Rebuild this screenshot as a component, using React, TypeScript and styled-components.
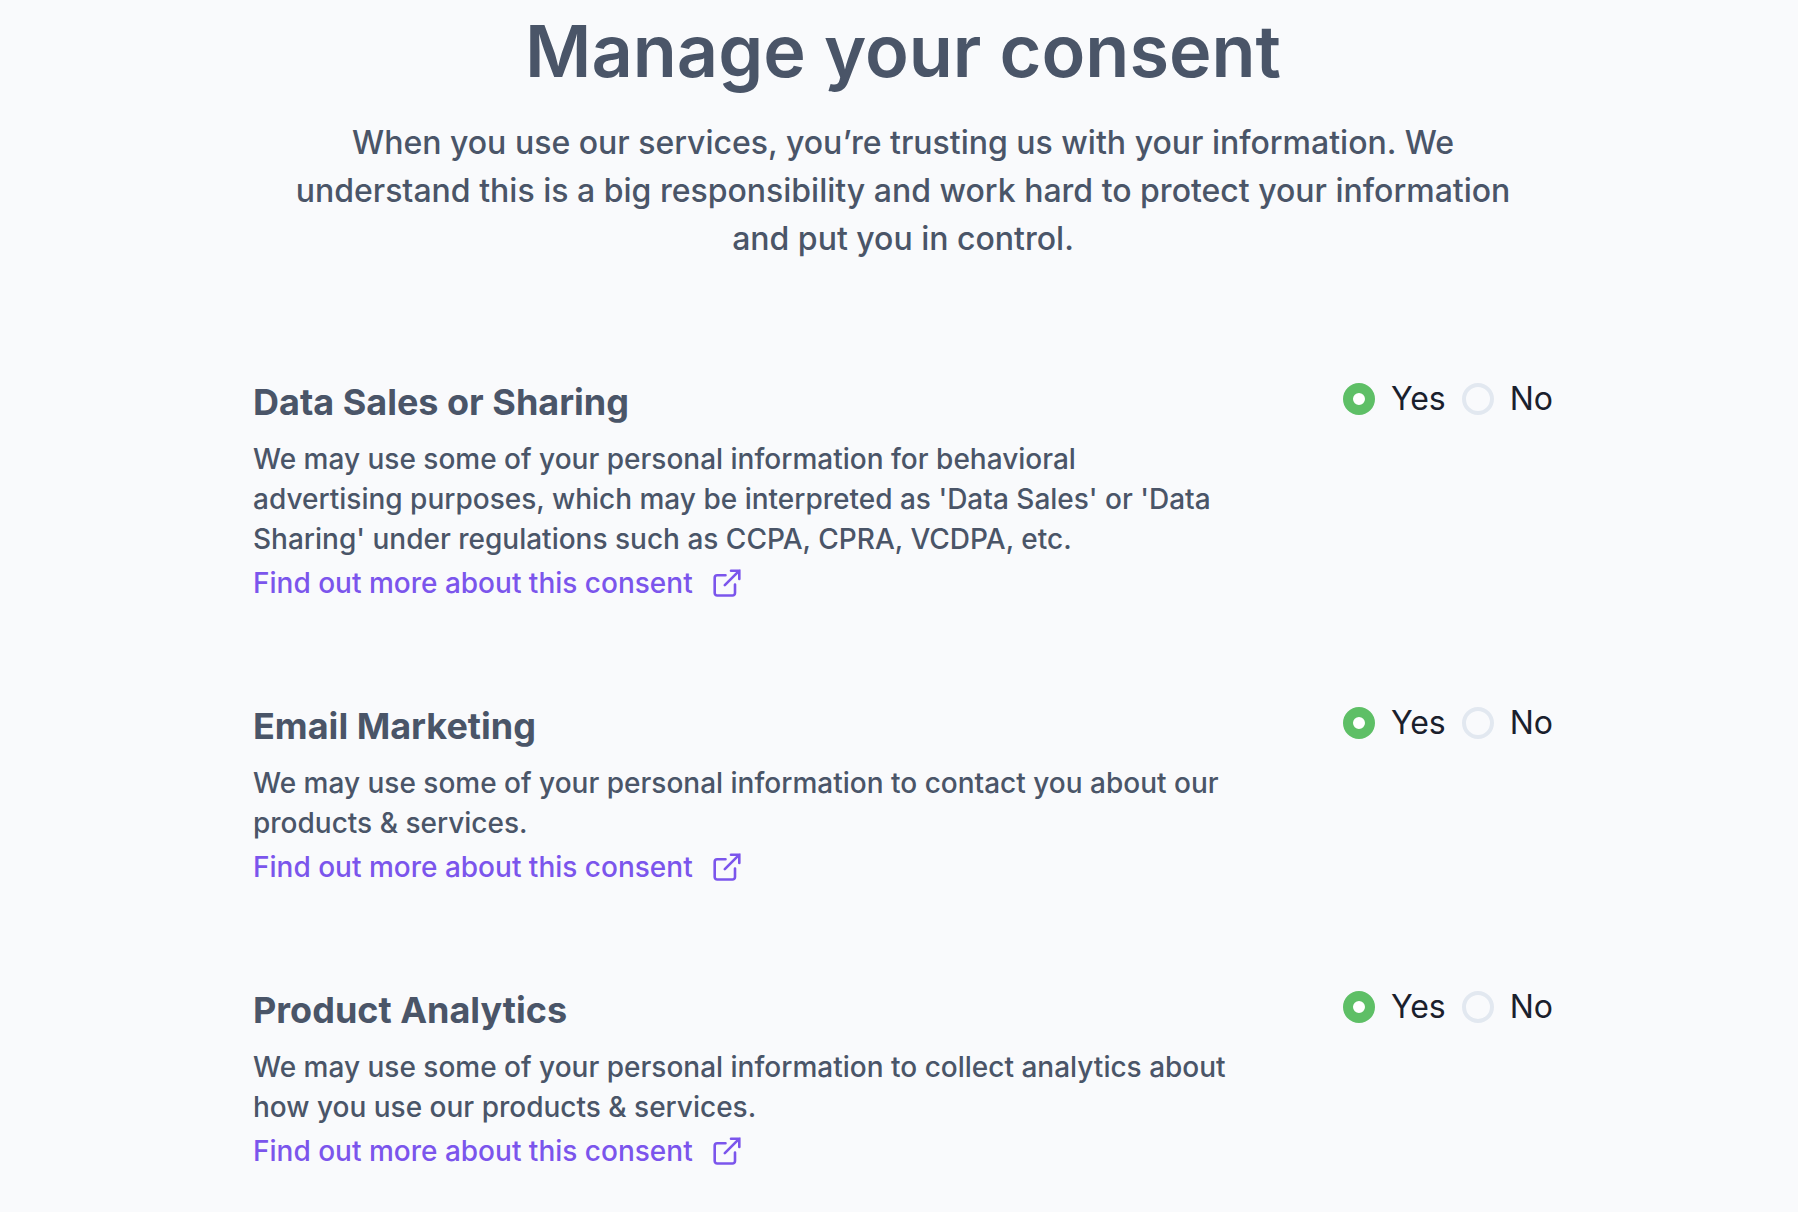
import React, { useState } from "react";
import styled, { createGlobalStyle } from "styled-components";

const GlobalStyle = createGlobalStyle`
  *, *::before, *::after { box-sizing: border-box; }
  body {
    margin: 0;
    background: #f9fafc;
    color: #4a5568;
    font-family: Inter, "Liberation Sans", sans-serif;
  }
`;

const Page = styled.main`
  display: flex;
  flex-direction: column;
  align-items: center;
  min-height: 100vh;
  padding: 7px 24px 48px 32px;
`;

const Header = styled.header`
  display: flex;
  flex-direction: column;
  gap: 24px;
  max-width: 1240px;
  text-align: center;
`;

const Title = styled.h1`
  margin: 0;
  font-size: 72px;
  line-height: 88px;
  font-weight: 600;
`;

const Intro = styled.p`
  margin: 0;
  font-size: 32px;
  line-height: 48px;
  font-weight: 500;
`;

const ConsentList = styled.div`
  display: flex;
  flex-direction: column;
  gap: 100px;
  width: 100%;
  max-width: 1300px;
  margin-top: 116px;
`;

const ConsentRow = styled.section`
  display: flex;
  justify-content: space-between;
  align-items: flex-start;
  gap: 72px;
`;

const Details = styled.div`
  flex: 1;
  max-width: 976px;
`;

const Heading = styled.h2`
  margin: 0;
  font-size: 36px;
  line-height: 46px;
  font-weight: 700;
`;

const Description = styled.p`
  margin: 14px 0 0;
  font-size: 28px;
  line-height: 40px;
  font-weight: 500;
`;

const MoreLink = styled.a`
  display: inline-flex;
  align-items: center;
  gap: 18px;
  margin-top: 4px;
  font-size: 28px;
  line-height: 40px;
  font-weight: 500;
  color: #7b55ec;
  text-decoration: none;
`;

const Choices = styled.fieldset`
  display: flex;
  gap: 16px;
  margin: 0;
  padding: 0;
  border: 0;
`;

const Choice = styled.label`
  display: flex;
  align-items: center;
  gap: 16px;
  font-size: 32px;
  line-height: 40px;
  color: #1a202c;
  cursor: pointer;
`;

const Radio = styled.input`
  appearance: none;
  width: 32px;
  height: 32px;
  margin: 0;
  border: 4px solid #e2e8f0;
  border-radius: 50%;
  background: #f9fafc;
  &:checked {
    border: 10px solid #5ebf66;
    background: #ffffff;
  }
`;

function ExternalIcon() {
  return (
    <svg
      width="32"
      height="32"
      viewBox="0 0 32 32"
      fill="none"
      stroke="currentColor"
      strokeWidth="2.6"
      strokeLinecap="round"
      aria-hidden="true"
    >
      <path d="M14.5 8.2H6.2a2.5 2.5 0 0 0-2.5 2.5V26a2.5 2.5 0 0 0 2.5 2.5h15.3A2.5 2.5 0 0 0 24 26v-8.5" />
      <path d="M13.8 18.2 28.3 3.7M20 3.7h8.3V12" />
    </svg>
  );
}

interface Consent {
  id: string;
  title: string;
  text: string;
}

const consents: Consent[] = [
  {
    id: "data-sales",
    title: "Data Sales or Sharing",
    text: "We may use some of your personal information for behavioral advertising purposes, which may be interpreted as 'Data Sales' or 'Data Sharing' under regulations such as CCPA, CPRA, VCDPA, etc.",
  },
  {
    id: "email",
    title: "Email Marketing",
    text: "We may use some of your personal information to contact you about our products & services.",
  },
  {
    id: "analytics",
    title: "Product Analytics",
    text: "We may use some of your personal information to collect analytics about how you use our products & services.",
  },
];

function ConsentItem({ id, title, text }: Consent) {
  const [allowed, setAllowed] = useState(true);
  return (
    <ConsentRow>
      <Details>
        <Heading id={id}>{title}</Heading>
        <Description>{text}</Description>
        <MoreLink href="#">
          Find out more about this consent
          <ExternalIcon />
        </MoreLink>
      </Details>
      <Choices aria-labelledby={id}>
        <Choice>
          <Radio type="radio" name={id} checked={allowed} onChange={() => setAllowed(true)} />
          Yes
        </Choice>
        <Choice>
          <Radio type="radio" name={id} checked={!allowed} onChange={() => setAllowed(false)} />
          No
        </Choice>
      </Choices>
    </ConsentRow>
  );
}

export default function App() {
  return (
    <>
      <GlobalStyle />
      <Page>
        <Header>
          <Title>Manage your consent</Title>
          <Intro>
            When you use our services, you’re trusting us with your information. We understand this is a big
            responsibility and work hard to protect your information and put you in control.
          </Intro>
        </Header>
        <ConsentList>
          {consents.map((consent) => (
            <ConsentItem key={consent.id} {...consent} />
          ))}
        </ConsentList>
      </Page>
    </>
  );
}
